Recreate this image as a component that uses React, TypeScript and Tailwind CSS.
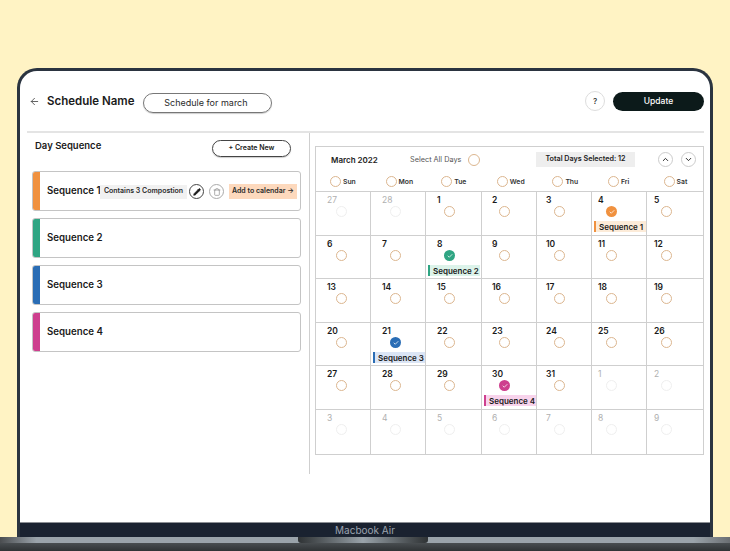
import { ArrowLeft, Check, ChevronDown, ChevronUp, Pencil, Trash } from 'lucide-react';

type SeqKey = 'orange' | 'green' | 'blue' | 'pink';

interface Day {
  day: number;
  muted?: boolean;
  seq?: SeqKey;
}

const SEQ: Record<SeqKey, { label: string; dot: string; tag: string; bar: string }> = {
  orange: { label: 'Sequence 1', dot: 'bg-[#f0913f]', tag: 'bg-[#fcebd8]', bar: 'bg-[#f0913f]' },
  green: { label: 'Sequence 2', dot: 'bg-[#2fa583]', tag: 'bg-[#dcf3ea]', bar: 'bg-[#2fa583]' },
  blue: { label: 'Sequence 3', dot: 'bg-[#2a6db5]', tag: 'bg-[#dbe5f5]', bar: 'bg-[#2a6db5]' },
  pink: { label: 'Sequence 4', dot: 'bg-[#ce3f8e]', tag: 'bg-[#f8d3ec]', bar: 'bg-[#ce3f8e]' },
};

const WEEKDAYS = ['Sun', 'Mon', 'Tue', 'Wed', 'Thu', 'Fri', 'Sat'];

const NUMBER_PAD = ['pl-[11px]', 'pl-[11px]', 'pl-[11px]', 'pl-[10px]', 'pl-[9px]', 'pl-[6px]', 'pl-[7px]'];
const CIRCLE_PAD = ['pl-[20px]', 'pl-[19px]', 'pl-[18px]', 'pl-[17px]', 'pl-[17px]', 'pl-[14px]', 'pl-[14px]'];

const DAYS: Day[] = [
  { day: 27, muted: true },
  { day: 28, muted: true },
  { day: 1 },
  { day: 2 },
  { day: 3 },
  { day: 4, seq: 'orange' },
  { day: 5 },
  { day: 6 },
  { day: 7 },
  { day: 8, seq: 'green' },
  { day: 9 },
  { day: 10 },
  { day: 11 },
  { day: 12 },
  { day: 13 },
  { day: 14 },
  { day: 15 },
  { day: 16 },
  { day: 17 },
  { day: 18 },
  { day: 19 },
  { day: 20 },
  { day: 21, seq: 'blue' },
  { day: 22 },
  { day: 23 },
  { day: 24 },
  { day: 25 },
  { day: 26 },
  { day: 27 },
  { day: 28 },
  { day: 29 },
  { day: 30, seq: 'pink' },
  { day: 31 },
  { day: 1, muted: true },
  { day: 2, muted: true },
  { day: 3, muted: true },
  { day: 4, muted: true },
  { day: 5, muted: true },
  { day: 6, muted: true },
  { day: 7, muted: true },
  { day: 8, muted: true },
  { day: 9, muted: true },
];

function Ring({ muted, className = 'h-[11px] w-[11px]' }: { muted?: boolean; className?: string }) {
  return (
    <span
      className={`block shrink-0 rounded-full border ${muted ? 'border-[#efefef]' : 'border-[#dcb68f]'} ${className}`}
    />
  );
}

function DayCell({ item, index }: { item: Day; index: number }) {
  const column = index % 7;
  const seq = item.seq ? SEQ[item.seq] : null;
  const lastRow = index >= 35;
  return (
    <div className={`min-w-0 border-[#cfcfcf] ${column < 6 ? 'border-r' : ''} ${lastRow ? '' : 'border-b'}`}>
      <div
        className={`pt-[2px] text-[8.5px] leading-[12px] ${NUMBER_PAD[column]} ${
          item.muted ? 'font-normal text-[#b0b0b0]' : 'font-semibold text-[#1a1a1a]'
        }`}
      >
        {item.day}
      </div>
      <div className={CIRCLE_PAD[column]}>
        {seq ? (
          <span className={`flex h-[11px] w-[11px] items-center justify-center rounded-full ${seq.dot}`}>
            <Check className="h-[6px] w-[6px] text-white" strokeWidth={3} />
          </span>
        ) : (
          <Ring muted={item.muted} />
        )}
      </div>
      {seq && (
        <div className={`mt-[4px] ml-[2px] flex h-[11px] w-[52px] items-center ${seq.tag}`}>
          <span className={`h-full w-[2px] shrink-0 ${seq.bar}`} />
          <span className="pl-[3px] text-[8px] leading-none font-semibold whitespace-nowrap text-[#1a1a1a]">
            {seq.label}
          </span>
        </div>
      )}
    </div>
  );
}

function SequenceCard({ name, bar, active }: { name: string; bar: string; active?: boolean }) {
  return (
    <div className="flex h-10 items-stretch overflow-hidden rounded-[3px] border border-[#c4c4c4] bg-white">
      <span className={`w-[7px] shrink-0 ${bar}`} />
      <div className="flex min-w-0 flex-1 items-center pt-[1px] pl-[7px]">
        <span className="w-[53px] shrink-0 text-[9.7px] font-semibold whitespace-nowrap text-[#1a1a1a]">{name}</span>
        {active && (
          <>
            <span className="flex h-[14px] w-[87px] items-center justify-center bg-[#f1f1f1] text-[7px] font-semibold whitespace-nowrap text-[#2a2a2a]">
              Contains 3 Compostion
            </span>
            <span className="ml-[2px] flex h-[15px] w-[15px] items-center justify-center rounded-full border border-[#444]">
              <Pencil className="h-[8px] w-[8px] fill-[#1a1a1a] text-[#1a1a1a]" />
            </span>
            <span className="ml-[5px] flex h-[15px] w-[15px] items-center justify-center rounded-full border border-[#aaa]">
              <Trash className="h-[8px] w-[8px] text-[#888]" />
            </span>
            <span className="ml-[5px] flex h-[15px] w-[68px] items-center justify-center bg-[#fdd9bd] text-[7px] font-semibold whitespace-nowrap text-[#2a2a2a]">
              Add to calendar →
            </span>
          </>
        )}
      </div>
    </div>
  );
}

export default function App() {
  return (
    <div className="flex h-[551px] w-[730px] flex-col overflow-hidden bg-[#fff3c4] font-['Inter',sans-serif]">
      <div className="mx-[17px] mt-[68px] flex h-[469px] flex-col overflow-hidden rounded-t-[20px] border-[3px] border-b-0 border-[#2b3440] bg-white">
        <header className="mr-[6px] ml-[7px] flex h-[62px] shrink-0 items-center border-b-2 border-[#e4e4e4] pl-[2px]">
          <ArrowLeft className="h-[11px] w-[11px] shrink-0 text-[#555]" />
          <h1 className="mt-[1px] ml-[7px] text-[11.5px] font-semibold whitespace-nowrap text-[#1a1a1a]">Schedule Name</h1>
          <div className="mt-[4px] ml-[9px] flex h-[20px] w-[129px] items-center justify-center rounded-full border border-[#777] pr-[4px] text-[9px] text-[#2a2a2a] shadow-[0_1px_1px_rgba(0,0,0,0.2)]">
            Schedule for march
          </div>
          <button className="ml-auto flex h-[20px] w-[20px] items-center justify-center rounded-full border border-[#ddd] text-[8px] font-medium text-[#333]">
            ?
          </button>
          <button className="ml-[8px] flex h-[19px] w-[91px] items-center justify-center rounded-full bg-[#0c1a1a] text-[8.5px] font-medium text-white">
            Update
          </button>
        </header>

        <div className="flex min-h-0 flex-1">
          <aside className="h-[341px] w-[290px] shrink-0 border-r border-[#cfcfcf] pr-[8px] pl-[12px]">
            <div className="flex items-start justify-between pt-[7px] pr-[10px]">
              <h2 className="pl-[3px] text-[9.5px] leading-[12px] font-semibold text-[#1a1a1a]">Day Sequence</h2>
              <button className="flex h-[17px] w-[79px] items-center justify-center rounded-full border border-[#444] text-[7px] font-semibold text-[#222] shadow-[0_1px_1px_rgba(0,0,0,0.2)]">
                + Create New
              </button>
            </div>
            <div className="mt-[14px] flex flex-col gap-[7px]">
              <SequenceCard name="Sequence 1" bar="bg-[#f0913f]" active />
              <SequenceCard name="Sequence 2" bar="bg-[#2fa583]" />
              <SequenceCard name="Sequence 3" bar="bg-[#2a6db5]" />
              <SequenceCard name="Sequence 4" bar="bg-[#ce3f8e]" />
            </div>
          </aside>

          <main className="min-w-0 flex-1 pt-[13px] pr-[6px] pl-[5px]">
            <div className="border border-[#cfcfcf]">
              <div className="h-[29px] pt-[5px] pl-[15px]">
                <div className="flex h-[15px] items-center">
                  <span className="w-[79px] text-[8px] font-semibold whitespace-nowrap text-[#222]">March 2022</span>
                  <span className="mt-[1px] w-[58px] text-[7.3px] whitespace-nowrap text-[#555]">Select All Days</span>
                  <Ring className="h-[12px] w-[12px]" />
                  <span className="ml-[56px] flex h-[15px] w-[99px] items-center justify-center bg-[#eeeeee] text-[7.2px] font-semibold whitespace-nowrap text-[#222]">
                    Total Days Selected: 12
                  </span>
                  <span className="ml-[23px] flex h-[15px] w-[15px] items-center justify-center rounded-full border border-[#ccc]">
                    <ChevronUp className="h-[9px] w-[9px] text-[#222]" strokeWidth={2.5} />
                  </span>
                  <span className="ml-[8px] flex h-[15px] w-[15px] items-center justify-center rounded-full border border-[#ccc]">
                    <ChevronDown className="h-[9px] w-[9px] text-[#222]" strokeWidth={2.5} />
                  </span>
                </div>
              </div>
              <div className="grid h-[15px] grid-cols-[repeat(6,55.6px)_auto] items-start pl-[14px]">
                {WEEKDAYS.map((name) => (
                  <div key={name} className="flex items-center gap-[2px]">
                    <Ring />
                    <span className="text-[6.8px] leading-[11px] font-semibold text-[#333]">{name}</span>
                  </div>
                ))}
              </div>
              <div className="grid grid-cols-[55px_55px_56px_55px_55px_55px_1fr] grid-rows-[44px_43px_44px_43px_44px_44px] border-t border-[#cfcfcf]">
                {DAYS.map((item, index) => (
                  <DayCell key={index} item={item} index={index} />
                ))}
              </div>
            </div>
          </main>
        </div>

        <div className="mt-auto flex h-[15px] shrink-0 items-center justify-center border-t border-[#8c8f94] bg-[#1a2230] text-[10px] leading-none text-[#9ca3af]">
          Macbook Air
        </div>
      </div>

      <div className="relative h-[14px] w-full shrink-0 bg-gradient-to-b from-[#5d6266] to-[#2f3335]">
        <div className="h-[6px] w-full bg-[linear-gradient(to_right,#4a4d50,#9aa3aa_5%,#9aa3aa_95%,#6a6e72)]" />
        <div className="absolute top-0 left-[298px] h-[6px] w-[130px] rounded-b-[3px] bg-gradient-to-r from-[#2f3335] via-[#9aa3aa] to-[#2f3335]" />
      </div>
    </div>
  );
}
